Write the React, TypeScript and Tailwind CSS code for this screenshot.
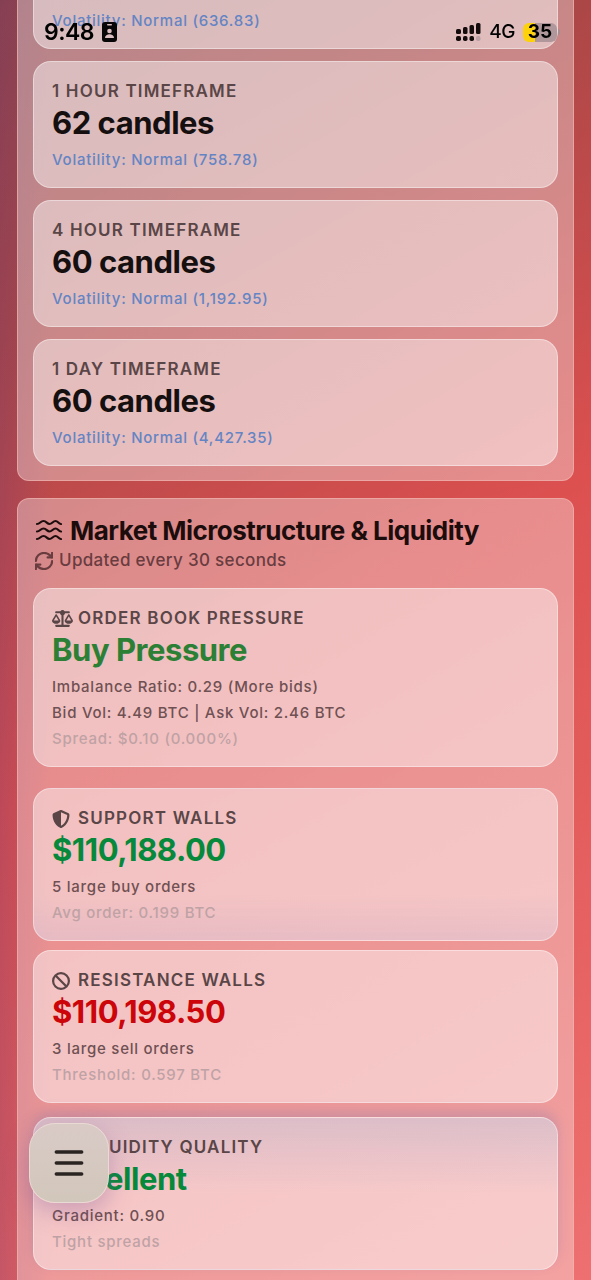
import type { ReactNode } from 'react';
import { FaBan, FaScaleBalanced, FaShieldHalved } from 'react-icons/fa6';
import { Menu, RefreshCw } from 'lucide-react';

type Line = { text: string; muted?: boolean };

const timeframes = [
  { label: '1 Hour Timeframe', candles: 62, volatility: '758.78' },
  { label: '4 Hour Timeframe', candles: 60, volatility: '1,192.95' },
  { label: '1 Day Timeframe', candles: 60, volatility: '4,427.35' },
];

function WavesIcon({ className }: { className: string }) {
  return (
    <svg className={className} viewBox="0 0 28 22" fill="none" stroke="currentColor" strokeWidth="2.2" strokeLinecap="round" aria-hidden="true">
      <path d="M2 5c3 0 3.500-3 6.500-3s3.500 3 6 3 3.500-3 6-3 3 2.600 5.500 3" />
      <path d="M2 12.500c3 0 3.500-3 6.500-3s3.500 3 6 3 3.500-3 6-3 3 2.600 5.500 3" />
      <path d="M2 20c3 0 3.500-3 6.500-3s3.500 3 6 3 3.500-3 6-3 3 2.600 5.500 3" />
    </svg>
  );
}

function Section({ className, children }: { className: string; children: ReactNode }) {
  return <section className={`border border-[#efb4ae]/70 bg-white/35 px-[15px] pb-[14px] ${className}`}>{children}</section>;
}

function Card({ className = '', children }: { className?: string; children: ReactNode }) {
  return (
    <article className={`rounded-[18px] border border-white/40 bg-white/45 px-[18px] pt-[18px] pb-[14px] ${className}`}>
      {children}
    </article>
  );
}

function Label({ icon, children }: { icon?: ReactNode; children: ReactNode }) {
  return (
    <h3 className="flex h-[23px] items-center text-[17px] font-semibold tracking-[0.07em] text-[#5a4547] uppercase">
      {icon && <span className="mr-1 flex w-[22px]">{icon}</span>}
      {children}
    </h3>
  );
}

function Value({ tone, children }: { tone: string; children: ReactNode }) {
  return <p className={`pb-1 text-[31px] leading-10 font-bold tracking-[-0.015em] ${tone}`}>{children}</p>;
}

function Volatility({ value }: { value: string }) {
  return (
    <p className="text-[15px] leading-[26px] font-medium tracking-wider text-[#6484c4]">Volatility: Normal ({value})</p>
  );
}

function MetricCard({ icon, label, value, tone, lines, className }: {
  icon: ReactNode;
  label: string;
  value: string;
  tone: string;
  lines: Line[];
  className?: string;
}) {
  return (
    <Card className={className}>
      <Label icon={icon}>{label}</Label>
      <Value tone={tone}>{value}</Value>
      {lines.map((line) => (
        <p
          key={line.text}
          className={`text-[15px] leading-[26px] font-medium tracking-wider ${line.muted ? 'text-[#bfa2a5]' : 'text-[#6f5053]'}`}
        >
          {line.text}
        </p>
      ))}
    </Card>
  );
}

function StatusBar() {
  return (
    <header className="fixed inset-x-0 top-0 z-20 flex items-center justify-between pt-5 pr-[34px] pl-11 text-black">
      <div className="flex h-6 items-center gap-2">
        <span className="text-[23px] font-semibold tracking-tight">9:48</span>
        <svg className="h-5 w-[15px]" viewBox="0 0 15 20" aria-hidden="true">
          <rect width="15" height="20" rx="3" fill="#080606" />
          <rect x="5" y="2" width="5" height="1.500" rx=".7" fill="#dcbec1" />
          <circle cx="7.500" cy="9" r="2.300" fill="#dcbec1" />
          <path d="M3 16c0-5 9-5 9 0z" fill="#dcbec1" />
        </svg>
      </div>
      <div className="flex h-6 items-center">
        <svg className="mr-2 h-[18px] w-[25px]" viewBox="0 0 25 18" aria-hidden="true">
          <g fill="#140c0c">
            <rect x="0" y="6" width="5" height="5" rx="1.500" />
            <rect x="7" y="4" width="4.500" height="7" rx="1.500" />
            <rect x="13.500" y="2" width="4.500" height="9" rx="1.500" />
            <rect x="20" y="0" width="4.500" height="11" rx="1.500" />
            <rect x="0" y="13" width="5" height="5" rx="1.800" />
            <rect x="7" y="13" width="4.500" height="5" rx="1.800" />
            <rect x="13.500" y="13" width="4.500" height="5" rx="1.800" />
          </g>
          <rect x="20" y="13" width="4.500" height="5" rx="1.800" fill="#bda0a4" />
        </svg>
        <span className="mr-2 text-[19px] font-medium tracking-tight">4G</span>
        <span className="relative flex h-[19px] w-[34px] items-center justify-center rounded-md bg-linear-to-r from-[#fdd20a] from-35% to-[#b0979b] to-35% text-[19px] font-bold">
          35
          <span className="absolute -right-[3px] h-[6px] w-[2px] rounded-r bg-[#a58d91]" />
        </span>
      </div>
    </header>
  );
}

export default function App() {
  return (
    <div className="min-h-screen bg-[linear-gradient(to_right,rgba(110,55,110,0.28),transparent_9%),linear-gradient(150deg,#8f434b,#ac4747_21%,#dc5050_50%,#ee7070)] font-['Inter','Liberation_Sans',sans-serif]">
      <StatusBar />
      <main className="flex flex-col gap-[17px] px-[17px]">
        <Section className="rounded-b-xl border-t-0">
          <div className="flex flex-col gap-3">
            <div className="h-[49px] rounded-b-[18px] border border-t-0 border-white/40 bg-white/45 px-[18px] pt-2">
              <Volatility value="636.83" />
            </div>
            {timeframes.map((frame) => (
              <Card key={frame.label}>
                <Label>{frame.label}</Label>
                <Value tone="text-[#15100f]">{frame.candles} candles</Value>
                <Volatility value={frame.volatility} />
              </Card>
            ))}
          </div>
        </Section>

        <Section className="rounded-t-xl border-b-0 pt-[15px]">
          <h2 className="flex h-8 items-center gap-[7px] pl-[2px] text-[26px] font-bold tracking-[-0.02em] text-[#1c0d0c]">
            <WavesIcon className="h-[22px] w-7" />
            Market Microstructure &amp; Liquidity
          </h2>
          <p className="flex h-[30px] items-center gap-[6px] pl-[2px] text-[17px] font-medium tracking-[0.02em] text-[#693c3f]">
            <RefreshCw size={18} viewBox="2 2 20 20" strokeWidth={2.4} />
            Updated every 30 seconds
          </p>
          <MetricCard
            className="mt-3"
            icon={<FaScaleBalanced size={21} />}
            label="Order Book Pressure"
            value="Buy Pressure"
            tone="text-[#2c8035]"
            lines={[
              { text: 'Imbalance Ratio: 0.29 (More bids)' },
              { text: 'Bid Vol: 4.49 BTC | Ask Vol: 2.46 BTC' },
              { text: 'Spread: $0.10 (0.000%)', muted: true },
            ]}
          />
          <MetricCard
            className="mt-[21px] bg-linear-to-b from-transparent from-70% to-[#b49cc4]/20"
            icon={<FaShieldHalved size={18} />}
            label="Support Walls"
            value="$110,188.00"
            tone="text-[#06893b]"
            lines={[{ text: '5 large buy orders' }, { text: 'Avg order: 0.199 BTC', muted: true }]}
          />
          <MetricCard
            className="mt-[9px]"
            icon={<FaBan size={18} />}
            label="Resistance Walls"
            value="$110,198.50"
            tone="text-[#cb0509]"
            lines={[{ text: '3 large sell orders' }, { text: 'Threshold: 0.597 BTC', muted: true }]}
          />
          <MetricCard
            className="mt-[14px] bg-linear-to-b from-[#b4b0ca]/40 to-transparent to-50% shadow-[0_-6px_12px_rgba(130,120,170,0.3)]"
            icon={<WavesIcon className="h-4 w-5" />}
            label="Liquidity Quality"
            value="Excellent"
            tone="text-[#06893b]"
            lines={[{ text: 'Gradient: 0.90' }, { text: 'Tight spreads', muted: true }]}
          />
        </Section>
      </main>
      <button
        type="button"
        aria-label="Open menu"
        className="fixed bottom-[77px] left-[29px] z-10 flex size-20 items-center justify-center rounded-[26px] border border-[#e9dad4] bg-linear-to-b from-[#d9cac6] to-[#d2c7bb] text-[#292321] shadow-[0_8px_24px_rgba(120,80,150,0.35)]"
      >
        <Menu size={38} strokeWidth={2.2} />
      </button>
    </div>
  );
}
